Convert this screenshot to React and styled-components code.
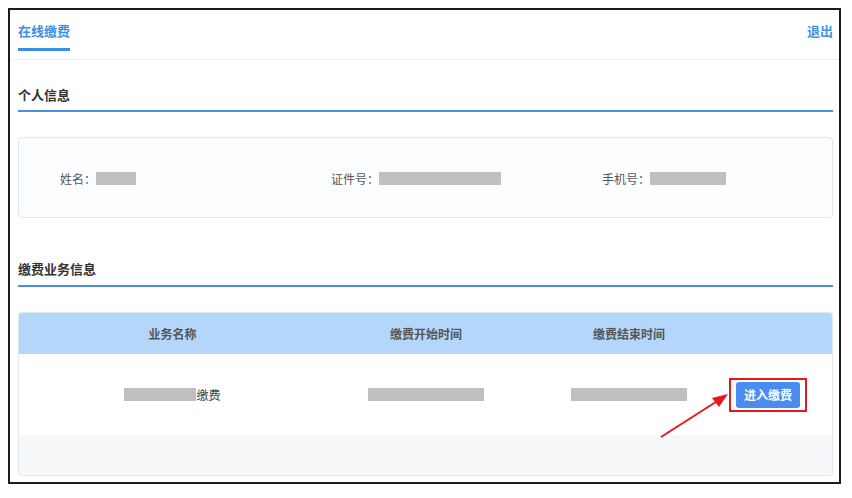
import styled, { createGlobalStyle } from "styled-components";

const GlobalStyle = createGlobalStyle`
  html, body {
    margin: 0;
    padding: 0;
    background: #ffffff;
    font-family: "Noto Sans CJK SC", "Noto Sans", sans-serif;
  }
`;

const Frame = styled.div`
  position: relative;
  margin: 8px;
  width: 829px;
  height: 472px;
  border: 2px solid #1c1c1c;
  background: #ffffff;
  overflow: hidden;
`;

const Header = styled.div`
  height: 49px;
  padding: 0 6px 0 8px;
  display: flex;
  justify-content: space-between;
  align-items: flex-start;
  border-bottom: 1px solid #eef1f4;
`;

const Tab = styled.div`
  padding-top: 11px;
  display: flex;
  flex-direction: column;
  font-size: 13px;
  line-height: 20px;
  font-weight: bold;
  color: #3a8ee6;

  &::after {
    content: "";
    margin-top: 7px;
    height: 3px;
    width: 52px;
    background: #3a8ee6;
  }
`;

const Logout = styled.a`
  padding-top: 11px;
  font-size: 13px;
  line-height: 20px;
  font-weight: bold;
  color: #4a90e2;
  cursor: pointer;
`;

const Content = styled.div`
  padding: 0 6px 0 8px;
`;

const SectionTitle = styled.div`
  margin-top: ${(p) => p.top}px;
  padding-bottom: ${(p) => p.gap}px;
  font-size: 13px;
  line-height: 20px;
  font-weight: bold;
  color: #333;
  border-bottom: 2px solid #4a8fdf;
`;

const InfoCard = styled.div`
  margin-top: 25px;
  height: 79px;
  border: 1px solid #dfe7ee;
  border-radius: 4px;
  background: #fcfdfe;
  display: grid;
  grid-template-columns: repeat(3, 1fr);
  align-items: center;
  padding-top: 2px;
  box-sizing: border-box;
  height: 81px;
`;

const Field = styled.div`
  padding-left: 41px;
  display: flex;
  align-items: center;
  font-size: 12px;
  color: #555;
`;

const Mask = styled.span`
  display: inline-block;
  width: ${(p) => p.w}px;
  height: 13px;
  background: #bfbfbf;
`;

const Table = styled.div`
  margin-top: 25px;
  border: 1px solid #e1e9f0;
  border-radius: 3px;
  overflow: hidden;
`;

const Row = styled.div`
  display: grid;
  grid-template-columns: 307px 200px 206px 1fr;
  height: ${(p) => p.h}px;
  background: ${(p) => p.bg};
  align-items: center;
`;

const HeadCell = styled.div`
  text-align: center;
  font-size: 12px;
  font-weight: bold;
  color: #555;
`;

const Cell = styled.div`
  display: flex;
  justify-content: center;
  align-items: center;
  font-size: 12px;
  color: #444;
`;

const ActionCell = styled.div`
  display: flex;
  justify-content: flex-start;
  align-items: center;
`;

const Highlight = styled.span`
  margin-left: -3px;
  display: inline-flex;
  padding: 2px 5px;
  border: 2px solid #e11b1b;
`;

const PayButton = styled.button`
  width: 64px;
  height: 26px;
  border: none;
  border-radius: 3px;
  background: #4a8cf0;
  color: #fff;
  font-family: inherit;
  font-size: 12px;
  font-weight: bold;
  padding: 0;
  cursor: pointer;
`;

const Arrow = styled.svg`
  position: absolute;
  left: 645px;
  top: 380px;
  width: 80px;
  height: 55px;
  overflow: visible;
`;

export default function App() {
  return (
    <>
      <GlobalStyle />
      <Frame>
        <Header>
          <Tab>在线缴费</Tab>
          <Logout>退出</Logout>
        </Header>
        <Content>
          <SectionTitle top={25} gap={5}>个人信息</SectionTitle>
          <InfoCard>
            <Field>
              姓名：<Mask w={40} />
            </Field>
            <Field>
              证件号：<Mask w={122} />
            </Field>
            <Field>
              手机号：<Mask w={76} />
            </Field>
          </InfoCard>
          <SectionTitle top={41} gap={6}>缴费业务信息</SectionTitle>
          <Table>
            <Row h={41} bg="#b4d6fa">
              <HeadCell>业务名称</HeadCell>
              <HeadCell>缴费开始时间</HeadCell>
              <HeadCell>缴费结束时间</HeadCell>
              <HeadCell />
            </Row>
            <Row h={81} bg="#ffffff">
              <Cell>
                <Mask w={72} />
                缴费
              </Cell>
              <Cell>
                <Mask w={116} />
              </Cell>
              <Cell>
                <Mask w={116} />
              </Cell>
              <ActionCell>
                <Highlight>
                  <PayButton>进入缴费</PayButton>
                </Highlight>
              </ActionCell>
            </Row>
            <Row h={40} bg="#f6f8fa" />
          </Table>
        </Content>
        <Arrow viewBox="0 0 80 55">
          <line x1="6" y1="47" x2="64" y2="10" stroke="#e8161b" strokeWidth="2" />
          <polygon points="73,4 57,8 64,17" fill="#e8161b" />
        </Arrow>
      </Frame>
    </>
  );
}
